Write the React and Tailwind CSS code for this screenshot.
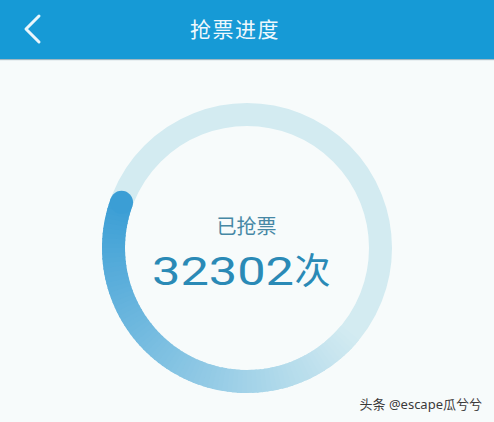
import React from 'react';

const SIZE = 290;
const C = SIZE / 2;
const R = 133.5;
const STROKE = 23;
const DARK = [59, 158, 213];
const TRACK = [211, 235, 241];

function pt(deg) {
  const a = (deg * Math.PI) / 180;
  return [C + R * Math.cos(a), C + R * Math.sin(a)];
}

function mix(t) {
  const c = DARK.map((d, i) => Math.round(d + (TRACK[i] - d) * t));
  return `rgb(${c[0]},${c[1]},${c[2]})`;
}

function ProgressRing() {
  const start = 200;
  const end = 40;
  const steps = 80;
  const segs = [];
  for (let i = 0; i < steps; i++) {
    const a1 = start - ((start - end) * i) / steps;
    const a2 = start - ((start - end) * (i + 1)) / steps - 0.6;
    const [x1, y1] = pt(a1);
    const [x2, y2] = pt(a2);
    segs.push(
      <path
        key={i}
        d={`M${x1} ${y1} A${R} ${R} 0 0 0 ${x2} ${y2}`}
        stroke={mix(i / steps)}
        strokeWidth={STROKE}
        fill="none"
      />,
    );
  }
  const [cx, cy] = pt(start);
  return (
    <svg width={SIZE} height={SIZE} viewBox={`0 0 ${SIZE} ${SIZE}`}>
      <circle cx={C} cy={C} r={R} stroke="#d3ebf1" strokeWidth={STROKE} fill="none" />
      {segs}
      <circle cx={cx} cy={cy} r={STROKE / 2} fill={mix(0)} />
    </svg>
  );
}

export default function App() {
  return (
    <div
      className="relative h-[422px] w-full overflow-hidden bg-[#f7fbfb]"
      style={{ fontFamily: '"Noto Sans", "Noto Sans CJK SC", sans-serif' }}
    >
      <header className="relative flex h-[59px] items-center justify-center bg-[#169ad6] shadow-[0_1px_1px_rgba(0,60,90,0.35)]">
        <button className="absolute left-[18px] top-[9px] p-1" aria-label="返回">
          <svg width="22" height="32" viewBox="0 0 22 32" fill="none">
            <path d="M17 3L4 16l13 13" stroke="#eaf6fc" strokeWidth="3" strokeLinecap="round" strokeLinejoin="round" />
          </svg>
        </button>
        <h1 className="mr-[24px] text-[21px] tracking-[1.5px] text-[#eef8fd]">抢票进度</h1>
      </header>

      <div className="flex justify-center pt-[44px] pr-[1px]">
        <div className="relative h-[290px] w-[290px]">
          <ProgressRing />
          <div className="absolute inset-0 flex flex-col items-center pt-[110px]">
            <div className="text-[20px] leading-[28px] text-[#4688a5]">已抢票</div>
            <div className="mt-[7px] flex items-center pr-[10px] leading-[44px] text-[#2a8ab6]">
              <span className="inline-block w-[142px] text-[38px]">
                <span className="inline-block origin-left scale-x-[1.33]" style={{ fontFamily: 'Roboto, sans-serif' }}>32302</span>
              </span>
              <span className="text-[36px]">次</span>
            </div>
          </div>
        </div>
      </div>

      <div className="absolute bottom-[10px] right-[12px] text-[13px] leading-[16px] text-[#3a3a3a] [text-shadow:0_0_2px_#fff]">
        头条 @escape瓜兮兮
      </div>
    </div>
  );
}
